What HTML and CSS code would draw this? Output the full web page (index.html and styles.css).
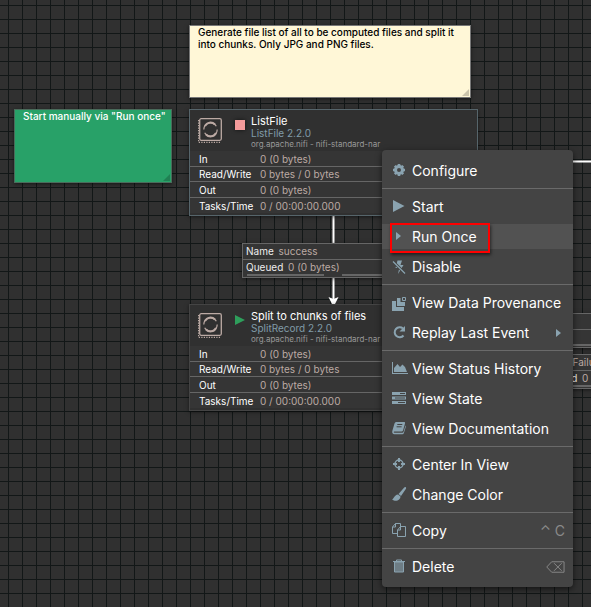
FILE: index.html
```html
<!DOCTYPE html>
<html lang="en">
<head>
<meta charset="utf-8">
<title>NiFi Flow</title>
<link rel="stylesheet" href="styles.css">
</head>
<body>
<svg width="0" height="0" class="defs" aria-hidden="true">
  <symbol id="processor" viewBox="0 0 24 25">
    <g fill="none" stroke="#bcaaa4">
      <rect x="1.7" y=".7" width="21.6" height="21.6" rx="1.5" stroke-width="1.3"/>
      <path d="M.6 2v22.300H22" stroke-width="1.200" stroke-dasharray="1.200 1.300"/>
      <path d="M5.800 11.500a6.700 6.700 0 0 1 12.500-3.200" stroke-width="1.200"/>
      <path d="M19.200 11.500a6.700 6.700 0 0 1-12.500 3.200" stroke-width="1.200"/>
      <path d="M7 8c2-4 7-4.500 10-1.500M18 15c-2 4-7 4.500-10 1.500" stroke-width="2"/>
    </g>
  </symbol>
</svg>
<main class="canvas">
  <svg class="links" aria-hidden="true">
    <path d="M333.500 215V300" stroke="#fff" stroke-width="2"/>
    <path d="M328.500 297l5 2 5-2-5 10z" fill="#fff"/>
    <path d="M570 161.500H591" stroke="#fff" stroke-width="2"/>
  </svg>

  <section class="note note-yellow">Generate file list of all to be computed files and split it into chunks. Only JPG and PNG files.</section>
  <section class="note note-green">Start manually via "Run once"</section>

  <article class="processor list-file">
    <header>
      <svg class="kind"><use href="#processor"/></svg>
      <span class="state stopped"></span>
      <div class="names">
        <h2>ListFile</h2>
        <p class="type">ListFile 2.2.0</p>
        <p class="bundle">org.apache.nifi - nifi-standard-nar</p>
      </div>
    </header>
    <table>
      <tr><th>In</th><td>0 <span>(0 bytes)</span></td></tr>
      <tr><th>Read/Write</th><td>0 bytes / 0 bytes</td></tr>
      <tr><th>Out</th><td>0 <span>(0 bytes)</span></td></tr>
      <tr><th>Tasks/Time</th><td>0 / 00:00:00.000</td></tr>
    </table>
  </article>

  <article class="processor split-record">
    <header>
      <svg class="kind"><use href="#processor"/></svg>
      <span class="state running"></span>
      <div class="names">
        <h2>Split to chunks of files</h2>
        <p class="type">SplitRecord 2.2.0</p>
        <p class="bundle">org.apache.nifi - nifi-standard-nar</p>
      </div>
    </header>
    <table>
      <tr><th>In</th><td>0 <span>(0 bytes)</span></td></tr>
      <tr><th>Read/Write</th><td>0 bytes / 0 bytes</td></tr>
      <tr><th>Out</th><td>0 <span>(0 bytes)</span></td></tr>
      <tr><th>Tasks/Time</th><td>0 / 00:00:00.000</td></tr>
    </table>
  </article>

  <section class="connection success">
    <p><b>Name</b> <span>success</span></p>
    <p><b>Queued</b> <span>0 <i>(0 bytes)</i></span></p>
    <div class="gauges"><span></span><span></span></div>
  </section>
  <section class="connection side"><p></p><p></p><div class="gauges"><span></span></div></section>
  <section class="connection failure">
    <p><b>Name</b> <span>Failure</span></p>
    <p><b>Queued</b> <span>0 <i>(0 bytes)</i></span></p>
    <div class="gauges"><span></span></div>
  </section>

  <nav class="menu" aria-label="Component actions">
    <button><svg viewBox="0 0 16 16"><circle cx="7" cy="7" r="3.500" fill="none" stroke="currentColor" stroke-width="3"/><path d="M7 1v2M7 11v2M1 7h2M11 7h2M2.800 2.800l1.400 1.400M9.800 9.800l1.400 1.400M2.800 11.200l1.400-1.400M9.800 4.200l1.400-1.400" stroke="currentColor" stroke-width="2.600"/></svg>Configure</button>
    <hr>
    <button><svg viewBox="0 0 16 16"><path d="M1 1l11.500 6L1 13z"/></svg>Start</button>
    <button class="active"><svg viewBox="0 0 16 16"><path d="M4 3l5 4-5 4z"/></svg>Run Once</button>
    <button><svg viewBox="0 0 16 16"><path d="M5.500 1.500h4.500L8.500 6H11.500L6 15 7.300 9H3.500z"/><path d="M1 2.500l12 12" stroke="#444" stroke-width="3"/><path d="M1 2.500l12 12" stroke="currentColor" stroke-width="1.200"/></svg>Disable</button>
    <hr>
    <button><svg viewBox="0 0 16 16"><path d="M0 6h4v6h8v4H0zM5 3h3.500v4H13v4H5z"/><path d="M10.500 2.500h3v3h-3z" fill="none" stroke="currentColor"/></svg>View Data Provenance</button>
    <button><svg viewBox="0 0 16 16"><path d="M11 3.500A5 5 0 1 0 11.500 10.500" fill="none" stroke="currentColor" stroke-width="2"/><path d="M13 1v5.500H7.500z"/></svg>Replay Last Event<span class="more"></span></button>
    <hr>
    <button><svg viewBox="0 0 16 16"><path d="M0 1h1v11h15v1H0zM2 11V7l3.500-4L8 6l2.500-2.500L13 6l2 5z"/></svg>View Status History</button>
    <button><svg viewBox="0 0 16 16"><path d="M0 1h14v3H0zM0 5.500h14v3H0zM0 10h14v3H0z"/><path d="M8 2.500h5M3 7h10M6 11.500h7" stroke="#444"/></svg>View State</button>
    <button><svg viewBox="0 0 16 16"><path d="M4.500 1H12c1 0 1.300.6 1 1.500l-2 7c-.2.700-.7 1-1.500 1H2.300c-.8 0-.8 1.300.2 1.300h8c.5 0 .8-.3 1-.8l2-6.500c.4.300.5.700.3 1.200l-2 6.600c-.2.500-.7.900-1.300.9H2.300C.8 13.200-.2 11.500.3 10L2.500 2.500C2.800 1.600 3.500 1 4.500 1z"/><path d="M5.300 3.500h5M4.600 5.800h5" stroke="#444"/></svg>View Documentation</button>
    <hr>
    <button><svg viewBox="0 0 16 16"><circle cx="7" cy="7" r="4" fill="none" stroke="currentColor" stroke-width="1.500"/><path d="M7 1v4M7 9v4M1 7h4M9 7h4" stroke="currentColor" stroke-width="2"/></svg>Center In View</button>
    <button><svg viewBox="0 0 16 16"><path d="M13.800.2c.6.500.3 1.300 0 1.800L9 9 6.500 7 12 .8c.5-.6 1.200-1 1.800-.6zM6 7.500L8.500 9.600C8.500 13 4 15.500 0 12.500 2 12 2 8 6 7.500z"/></svg>Change Color</button>
    <hr>
    <button><svg viewBox="0 0 16 16"><path d="M5.500 10.500h-5V4L3.500.5h5V4M3.500.5V4H.5M5.500 13.500V7l3-3.500h5v10zM8.500 3.500V7h-3" fill="none" stroke="currentColor"/></svg>Copy<kbd>⌃ C</kbd></button>
    <hr>
    <button><svg viewBox="0 0 16 16"><path d="M1 2.500h12M4.500 2.500v-1.500h5v1.500" fill="none" stroke="currentColor"/><path d="M2.500 3h9v10h-9z" fill-opacity=".6" stroke="currentColor"/></svg>Delete<kbd><svg class="erase" viewBox="0 0 20 12"><path d="M6 .5h13v11H6L.8 6zM8.500 2l8 8M16.500 2l-8 8" fill="none" stroke="currentColor"/></svg></kbd></button>
  </nav>
  <div class="highlight"></div>
</main>
</body>
</html>
```
FILE: styles.css
```css
* { box-sizing: border-box; }
body {
  margin: 0;
  font-family: Inter, "Liberation Sans", sans-serif;
  font-size: 10px;
  color: #fff;
}
h2, p { margin: 0; font-weight: 400; }
.defs { position: absolute; }
.canvas {
  position: relative;
  min-height: 100vh;
  overflow: hidden;
  background-color: #303030;
  background-image:
    linear-gradient(#121717 1px, transparent 1px),
    linear-gradient(90deg, #121717 1px, transparent 1px);
  background-size: 14px 14px;
  background-position: 8px 5px;
}
.links { position: absolute; inset: 0; width: 100%; height: 100%; }

.note {
  position: absolute;
  padding: 0 4px 0 8px;
  font-weight: 500;
  line-height: 12px;
  border: 1px solid #777;
  box-shadow: 0 1px 4px #0008;
}
.note::after {
  content: "";
  position: absolute;
  right: 1px;
  bottom: 1px;
  border-style: solid;
  border-width: 0 0 7px 7px;
  border-color: transparent transparent #0003;
}
.note-yellow { left: 189px; top: 25px; width: 282px; height: 73px; background: #fff7d7; color: #000; }
.note-green { left: 14px; top: 109px; width: 158px; height: 74px; background: #28a168; border-color: #4a6b5b; }

.processor {
  position: absolute;
  left: 189px;
  width: 289px;
  padding-bottom: 2px;
  background: #303030;
  border: 1px solid #444;
  box-shadow: 0 1px 4px #0008;
}
.list-file { top: 109px; border-color: #56656b; }
.split-record { top: 304px; }
.processor header { display: flex; height: 41px; padding: 4px 0 0 8px; }
.kind { width: 24px; height: 25px; margin-top: 4px; }
.state { width: 10px; height: 10px; margin: 6px 6px 0 13px; }
.stopped { background: #f49b9b; box-shadow: 0 0 4px #000a; }
.running { background: #2e9e5b; clip-path: polygon(0 0, 100% 50%, 0 100%); }
.names { white-space: nowrap; }
.names h2 { font-size: 11px; line-height: 14px; }
.type { line-height: 11px; color: #809ba8; }
.bundle { font-size: 8px; line-height: 10px; color: #999; }
table { width: 100%; border-spacing: 0; background: #353535; }
tr { height: 16px; }
tr:nth-child(even) { height: 15px; }
th, td {
  padding: 0;
  border-bottom: 1px solid #666;
  line-height: 14px;
  font-weight: 400;
  text-align: left;
}
tr:last-child > * { border: 0; }
th { width: 70px; padding-left: 9px; }
td { color: #bcaaa4; }

.connection {
  position: absolute;
  width: 182px;
  border: 1px solid #666;
  background: #353535;
  box-shadow: 0 1px 4px #0008;
}
.connection p { height: 15px; padding-left: 3px; line-height: 15px; color: #bcaaa4; white-space: nowrap; }
.connection p + p { border-top: 1px solid #666; line-height: 14px; }
.connection b { margin-right: 2px; font-weight: 400; color: #eee; }
.connection i { font-style: normal; }
.gauges { display: flex; gap: 18px; padding: 0 4px 1px; }
.gauges span { flex: 1; height: 2px; background: #666; }
.success { left: 242px; top: 243px; }
.side { left: 480px; top: 313px; }
.failure { left: 536px; top: 354px; }

.menu {
  position: absolute;
  left: 382px;
  top: 150px;
  width: 191px;
  display: flex;
  flex-direction: column;
  gap: 5px;
  padding: 8px 0;
  background: #444;
  border-radius: 4px;
  box-shadow: 0 2px 6px #0009;
}
.menu hr { width: 100%; height: 1px; margin: 0; border: 0; background: #6a6a6a; }
.menu button {
  display: flex;
  align-items: center;
  height: 25px;
  padding: 0 8px 0 10px;
  border: 0;
  background: none;
  color: #fff;
  font: 14px/20px Inter, "Liberation Sans", sans-serif;
  text-align: left;
  white-space: nowrap;
}
.menu button.active { background: #525252; }
.menu svg { width: 16px; height: 16px; margin-right: 4px; color: #8aa3b0; fill: currentColor; overflow: visible; }
.more { margin: 0 4px 0 auto; border: solid transparent; border-width: 4px 0 4px 5px; border-left-color: #8aa3b0; }
.menu kbd { display: flex; margin-left: auto; font: inherit; color: #8a8a8a; }
.menu kbd .erase { width: 19px; height: 12px; margin: 0; color: #8a8a8a; }
.highlight {
  position: absolute;
  left: 390px;
  top: 223px;
  width: 100px;
  height: 30px;
  border: 2px solid #f00;
  box-shadow: 1px 2px 3px #0008;
  pointer-events: none;
}
```
